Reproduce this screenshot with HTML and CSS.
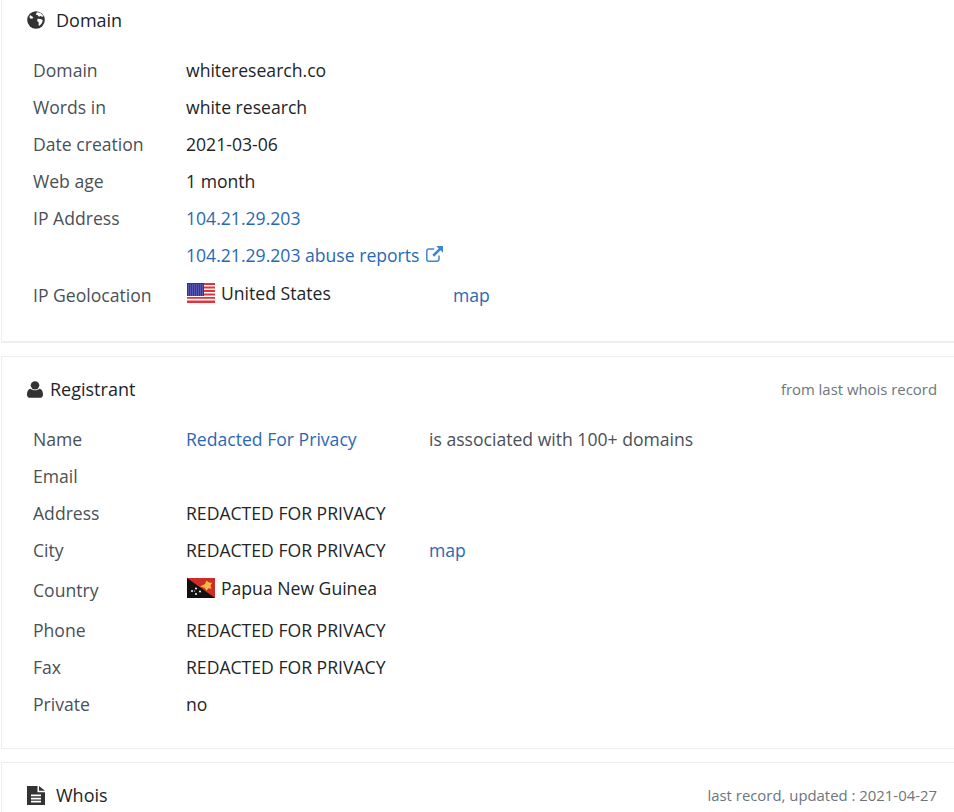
FILE: index.html
```html
<!DOCTYPE html>
<html lang="en">
<head>
<meta charset="utf-8">
<title>whiteresearch.co</title>
<link rel="stylesheet" href="styles.css">
</head>
<body>
<section class="card card-domain">
  <header class="card-head">
    <svg class="icon icon-globe" viewBox="0 0 18 18" aria-hidden="true"><circle cx="9" cy="9" r="8.800" fill="#333"/><path fill="#fff" d="M10 1.200l3 .6 2.400 2 .9 1.800-1.600.2-1-1-.9.8-1.600-.3-.5-1.400-1.400.2-.3-1.200zM10.600 7.800l3 .2 2.200 1-.8 3-2.400 2.700-1.100-.5.3-2.600-1.700-1.600zM2.400 5.700l1.300-1.700.9 1.200 1.600.9-.6 1.500-1.700.2-1.200-1z"/></svg>
    <h2 class="title title-gap">Domain</h2>
  </header>
  <div class="rows">
    <div class="row"><span class="label">Domain</span><span class="value">whiteresearch.co</span></div>
    <div class="row"><span class="label">Words in</span><span class="value">white research</span></div>
    <div class="row"><span class="label">Date creation</span><span class="value">2021-03-06</span></div>
    <div class="row"><span class="label">Web age</span><span class="value">1 month</span></div>
    <div class="row"><span class="label">IP Address</span><a class="value link" href="#">104.21.29.203</a></div>
    <div class="row"><span class="label"></span><a class="value link" href="#">104.21.29.203 abuse reports <svg class="icon-ext" viewBox="0 0 18 18" aria-hidden="true"><path fill="none" stroke="#3f86cc" stroke-width="1.500" d="M14 10.500v3.700a2 2 0 0 1-2 2H3.800a2 2 0 0 1-2-2V6a2 2 0 0 1 2-2h5.400"/><path fill="#3f86cc" d="M11.300 1H18v6.700l-2.400-2.400-6.400 6.400-1.900-1.900 6.400-6.400z"/></svg></a></div>
    <div class="row row-flag"><span class="label">IP Geolocation</span>
      <span class="value value-flag geo">
        <svg class="flag" viewBox="0 0 28 20" aria-hidden="true"><rect width="28" height="20" fill="#fff"/><path fill="#e0333c" d="M0 0h28v2H0zM0 3.500h28v2H0zM0 7h28v2H0zM0 10.500h28v2H0zM0 14h28v1.700H0zM0 17.500h28V20H0z"/><rect width="17" height="13" fill="#33339a"/><path fill="none" stroke="#7f7fc8" stroke-width="1" stroke-dasharray="1 1" d="M1 2h15M1 4h15M1 6h15M1 8h15M1 10h15M1 12h15"/></svg>
        <span>United States</span>
      </span>
      <a class="link map-domain" href="#">map</a>
    </div>
  </div>
</section>

<section class="card card-registrant">
  <header class="card-head">
    <svg class="icon icon-user" viewBox="0 0 16 18" preserveAspectRatio="none" aria-hidden="true"><circle cx="8" cy="4.600" r="4.300" fill="#333"/><path fill="#333" d="M0 14.500C0 11 1.200 8.700 3.600 8.300 4.800 9.300 6.300 9.900 8 9.900s3.200-.6 4.400-1.600C14.800 8.700 16 11 16 14.500c0 2-1.300 3.300-3 3.300H3c-1.700 0-3-1.300-3-3.300z"/></svg>
    <h2 class="title">Registrant</h2>
    <span class="note">from last whois record</span>
  </header>
  <div class="rows">
    <div class="row"><span class="label">Name</span><a class="value value-narrow link" href="#">Redacted For Privacy</a><span class="extra">is associated with 100+ domains</span></div>
    <div class="row"><span class="label">Email</span></div>
    <div class="row"><span class="label">Address</span><span class="value">REDACTED FOR PRIVACY</span></div>
    <div class="row"><span class="label">City</span><span class="value value-narrow">REDACTED FOR PRIVACY</span><a class="extra link" href="#">map</a></div>
    <div class="row row-country"><span class="label">Country</span>
      <span class="value value-flag">
        <svg class="flag flag-png" viewBox="0 0 28 20" aria-hidden="true"><rect width="28" height="20" fill="#cf2b27"/><path fill="#111" d="M0 0v20h28z"/><path fill="#f5b942" d="M13 8.500l5-2.500 1.500-3.500 2.500 2 3 .3-1.500 3 1 3-3-.5-2 2.500-2-3z"/><g fill="#fff"><circle cx="5" cy="13" r="1"/><circle cx="9" cy="10.500" r="1"/><circle cx="9" cy="16" r="1"/><circle cx="13" cy="13.500" r="1"/><circle cx="7.500" cy="13" r=".6"/></g></svg>
        <span>Papua New Guinea</span>
      </span>
    </div>
    <div class="row"><span class="label">Phone</span><span class="value">REDACTED FOR PRIVACY</span></div>
    <div class="row"><span class="label">Fax</span><span class="value">REDACTED FOR PRIVACY</span></div>
    <div class="row"><span class="label">Private</span><span class="value">no</span></div>
  </div>
</section>

<section class="card card-whois">
  <header class="card-head">
    <svg class="icon icon-file" viewBox="0 0 18 20" preserveAspectRatio="none" aria-hidden="true"><path fill="#333" d="M0 0h10.500v6.500H18V20H0z"/><path fill="#333" d="M12 0l6 5h-6z"/><path fill="#fff" d="M4 9h10v1.800H4zM4 12.300h10v1.800H4zM4 15.600h10v1.800H4z"/></svg>
    <h2 class="title title-gap">Whois</h2>
    <span class="note">last record, updated : 2021-04-27</span>
  </header>
</section>
</body>
</html>
```
FILE: styles.css
```css
html, body {
  margin: 0;
  padding: 0;
  background: #fff;
  overflow: hidden;
  height: 812px;
}

body {
  font-family: "Open Sans", "Liberation Sans", sans-serif;
  font-size: 17.6px;
  color: #212529;
  padding-left: 1px;
}

.card {
  border: 1px solid #eeeeee;
  border-right: 0;
  background: #fff;
  margin-bottom: 13px;
}

.card-domain {
  border-top: 0;
  height: 343px;
  box-sizing: border-box;
  border-bottom-width: 2px;
}

.card-registrant {
  height: 393px;
  box-sizing: border-box;
}

.card-whois {
  height: 50px;
  box-sizing: border-box;
  border-bottom: 0;
}

.card-head {
  display: flex;
  align-items: center;
  height: 42px;
  padding: 0 17px 0 25px;
}

.card-domain .card-head {
  height: 39px;
}

.card-registrant .card-head,
.card-whois .card-head {
  margin-top: 11px;
}

.icon {
  flex: none;
  display: block;
}

.icon-globe {
  width: 18px;
  height: 18px;
}

.icon-user {
  width: 16px;
  height: 17px;
  margin-right: 7px;
}

.icon-file {
  width: 18px;
  height: 19px;
}

.title {
  margin: 0;
  font-size: 18px;
  font-weight: 500;
  color: #212529;
  line-height: 24px;
}

.title-gap {
  margin-left: 11px;
}

.note {
  margin-left: auto;
  font-size: 14.9px;
  color: #6c757d;
}

.rows {
  padding: 10px 0 0 31px;
}

.card-domain .rows {
  padding-top: 12px;
}

.row {
  display: flex;
  align-items: center;
  height: 37px;
  white-space: nowrap;
}

.row-flag {
  height: 43px;
}

.row-country {
  height: 43px;
}

.label {
  flex: none;
  width: 153px;
  color: #495057;
}

.value {
  color: #212529;
}

.value-narrow {
  flex: none;
  width: 243px;
}

.value-flag {
  display: flex;
  align-items: center;
  gap: 6px;
  position: relative;
  top: -2px;
}

.geo {
  flex: none;
  width: 267px;
}

.flag {
  display: block;
  width: 28px;
  height: 20px;
  margin-left: 1px;
}

.extra {
  color: #495057;
}

.link {
  color: #2a68b5;
  text-decoration: none;
}

.icon-ext {
  display: inline-block;
  width: 18px;
  height: 18px;
  margin-left: 1px;
  vertical-align: -1px;
}
```
